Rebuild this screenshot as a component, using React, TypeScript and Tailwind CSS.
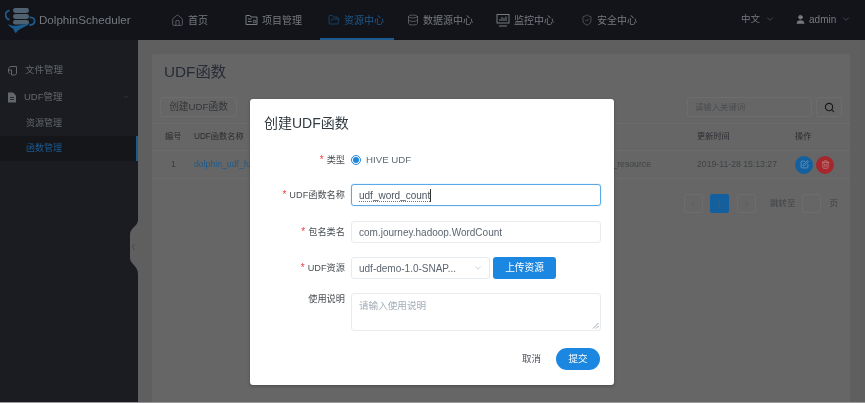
import React from 'react';
import { ChevronDown, ChevronLeft, ChevronRight, Database, FolderOpen, Home, Search, ShieldCheck, SquarePen, Trash2, User } from 'lucide-react';

const font = 'font-["Liberation_Sans","Noto_Sans_CJK_SC",sans-serif]';

const Logo = () => (
    <svg width="34" height="34" viewBox="0 0 34 34" fill="none" className="shrink-0">
        <path d="M4.5 7.5 C1 8 0 11 1 13.5 C1.5 15.5 3 16.5 4.5 16.5" stroke="#1d5a8a" strokeWidth="1.8" />
        <path d="M24.5 14.5 C29 14 30 17 29.5 19 C29 21 27 22 24.5 22" stroke="#1d5a8a" strokeWidth="1.8" />
        <rect x="8" y="5" width="16" height="5" rx="2.4" fill="#4f6272" />
        <rect x="8" y="11" width="16" height="5" rx="2.4" fill="#4f6272" />
        <rect x="8" y="17" width="16" height="4.5" rx="2.2" fill="#4f6272" />
        <path d="M3 21 C7 24 15 23 25 20 C20 25 14 25 11 30 C9.5 30 9 27 8 25.5 C6 24.5 4 23 3 21 Z" fill="#1a5c90" />
    </svg>
);

const ProjectIcon = () => (
    <svg width="13" height="12" viewBox="0 0 13 12" fill="none" stroke="#777a7e" strokeWidth="1">
        <path d="M1 10.5 V1.5 H5 L6 3 H12 V10.5 Z" />
        <path d="M3 5 H6.5 M3 7.5 H6.5" />
        <circle cx="9.5" cy="7.5" r="1.3" />
    </svg>
);

const MonitorIcon = () => (
    <svg width="14" height="13" viewBox="0 0 14 13" fill="none" stroke="#777a7e" strokeWidth="1">
        <rect x="1" y="0.5" width="12" height="8.5" />
        <path d="M4 7 V5 M6 7 V3 M8 7 V4 M10 7 V2.5 M3 12 H11" />
    </svg>
);

const FilesIcon = () => (
    <svg width="11" height="11" viewBox="0 0 11 11" fill="none" stroke="#63666a" strokeWidth="1">
        <path d="M4 1.5 H9.5 V8 C9.5 9.3 8.5 10 7.5 10 H4.5 V5 H1.5 C1.5 3 2.5 1.5 4 1.5 Z" />
        <path d="M1.5 5 V7.5 L3 9" />
    </svg>
);

const DocIcon = () => (
    <svg width="10" height="11" viewBox="0 0 10 11">
        <path d="M1 0.5 H6 L9 3.5 V10.5 H1 Z" fill="#63666a" />
        <path d="M3 5.5 H7 M3 7.5 H7" stroke="#1a1c21" strokeWidth="0.8" />
    </svg>
);

const NavItem: React.FC<{ icon: React.ReactNode; label: string; className: string; active?: boolean }> = ({ icon, label, className, active }) => (
    <div className={`flex items-center h-10 gap-[4px] text-[10px] ${active ? 'text-[#1d5a8f]' : 'text-[#777a7e]'} ${className}`}>
        {icon}
        <span>{label}</span>
    </div>
);

const PageBox: React.FC<{ children?: React.ReactNode; className?: string }> = ({ children, className = '' }) => (
    <div className={`w-[19px] h-[19px] flex items-center justify-center rounded-[2px] border border-[#6c6d6d] text-[#565757] ${className}`}>
        {children}
    </div>
);

const FormRow: React.FC<{ label: string; required?: boolean; className?: string; children: React.ReactNode }> = ({ label, required, className = '', children }) => (
    <div className={`flex items-center ${className}`}>
        <div className="w-[81px] text-right text-[9.2px] text-[#4a4f55] mr-[6px] whitespace-nowrap">
            {required && <span className="text-[#f03c3c] mr-[3px] text-[10px]">*</span>}
            {label}
        </div>
        {children}
    </div>
);

export default function App() {
    return (
        <div className={`relative w-[865px] h-[403px] overflow-hidden flex flex-col bg-[#5f5f5f] border-b border-[#9a9a9a] blur-[0.35px] ${font}`}>
            {/* Top nav */}
            <header className="h-10 shrink-0 bg-[#12141a] flex items-center pl-[5px] text-[#777a7e]">
                <Logo />
                <span className="text-[11.6px] w-[132px]">DolphinScheduler</span>
                <NavItem icon={<Home size={13} strokeWidth={1.2} />} label="首页" className="w-[74px]" />
                <NavItem icon={<ProjectIcon />} label="项目管理" className="w-[75px]" />
                <div className="relative w-[87px] pl-[8px] h-10 flex items-center">
                    <NavItem icon={<FolderOpen size={12} strokeWidth={1.2} />} label="资源中心" className="" active />
                    <div className="absolute bottom-0 left-0 w-[74px] h-[2px] bg-[#1d5a8f]" />
                </div>
                <NavItem icon={<Database size={12} strokeWidth={1.3} />} label="数据源中心" className="w-[89px]" />
                <NavItem icon={<MonitorIcon />} label="监控中心" className="w-[85px]" />
                <NavItem icon={<ShieldCheck size={12} strokeWidth={1.1} />} label="安全中心" className="w-[160px]" />
                <span className="text-[9.5px] mb-[2px]">中文</span>
                <ChevronDown size={10} strokeWidth={1.2} className="ml-[5px] mb-[2px]" />
                <User size={11} fill="#777a7e" className="ml-[20px] mb-[2px]" />
                <span className="text-[10px] ml-[3px] mb-[2px]">admin</span>
                <ChevronDown size={10} strokeWidth={1.2} className="ml-[5px] mb-[2px]" />
            </header>

            <div className="flex-1 flex min-h-0">
                {/* Sidebar */}
                <aside className="relative w-[138px] shrink-0 bg-[#1a1c21] pt-[19px] text-[9.5px] text-[#63666a]">
                    <div className="flex items-center h-[22px] pl-[7px] gap-[7px]">
                        <FilesIcon />
                        <span>文件管理</span>
                    </div>
                    <div className="flex items-center h-[22px] pl-[7px] gap-[7px] mt-[5px]">
                        <DocIcon />
                        <span>UDF管理</span>
                        <ChevronDown size={8} className="ml-auto mr-[8px] text-[#3a3c40]" />
                    </div>
                    <div className="h-[25px] mt-[3px] pl-[26px] flex items-center text-[9px]">资源管理</div>
                    <div className="h-[25px] pl-[26px] flex items-center bg-[#14161a] text-[9px] text-[#1d5a8f] border-r-2 border-[#1d5a8f]">函数管理</div>
                    {/* collapse handle */}
                    <svg width="8" height="54" viewBox="0 0 8 54" className="absolute right-0 top-[180px]">
                        <path d="M8 0 C8 6 0 8 0 14 V38 C0 44 8 46 8 54 Z" fill="#5f5f5f" />
                        <path d="M4.5 24 L2.5 27 L4.5 30" stroke="#45474a" fill="none" />
                    </svg>
                </aside>

                {/* Content */}
                <main className="flex-1 pt-[14px] pl-[14px] pr-[15px] min-w-0">
                    <div className="h-full bg-[#666666] rounded-t-[2px] text-[#3f4245]">
                        <h1 className="text-[15.3px] text-[#262b35] pl-[12px] pt-[7px] leading-[22px]">UDF函数</h1>
                        <div className="flex items-center mt-[14px] pl-[8px] pr-[8px]">
                            <div className="w-[77px] h-[20px] flex items-center justify-center border border-[#6c6d6d] rounded-[3px] text-[9.7px] text-[#333538]">创建UDF函数</div>
                            <div className="ml-auto w-[125px] h-[20px] flex items-center pl-[7px] border border-[#6c6d6d] rounded-[3px] text-[8.4px] text-[#4a4c4e]">请输入关键词</div>
                            <div className="ml-[4px] w-[26px] h-[20px] flex items-center justify-center border border-[#6c6d6d] rounded-[3px] text-[#16181c]">
                                <Search size={11} strokeWidth={2.4} />
                            </div>
                        </div>
                        {/* Table */}
                        <div className="mt-[6px] border-t border-[#6b6c6c]">
                            <div className="h-[27px] flex items-center text-[8.2px] text-[#2a2c30] border-b border-[#6b6c6c]">
                                <span className="ml-[13px] w-[29px]">编号</span>
                                <span>UDF函数名称</span>
                                <span className="ml-auto w-[98px]">更新时间</span>
                                <span className="w-[55px]">操作</span>
                            </div>
                            <div className="h-[28px] flex items-center text-[8.7px] border-b border-[#6b6c6c]">
                                <span className="ml-[19px] w-[23px] text-[#3a3c40]">1</span>
                                <span className="text-[#1d5a8f] whitespace-nowrap">dolphin_udf_func</span>
                                <span className="ml-auto mr-[46px] text-[#3f4245]">_resource</span>
                                <span className="w-[98px] text-[#3f4245]">2019-11-28 15:13:27</span>
                                <div className="w-[55px] flex gap-[3px]">
                                    <div className="w-[18px] h-[18px] rounded-full bg-[#14609f] flex items-center justify-center text-[#6f9bc4]"><SquarePen size={9} /></div>
                                    <div className="w-[18px] h-[18px] rounded-full bg-[#a5282e] flex items-center justify-center text-[#c78486]"><Trash2 size={9} /></div>
                                </div>
                            </div>
                            {/* Pagination */}
                            <div className="flex items-center justify-end mt-[15px] pr-[12px] text-[8.5px]">
                                <PageBox><ChevronLeft size={9} /></PageBox>
                                <PageBox className="ml-[7px] bg-[#14609f] border-[#14609f] text-[#8fb0cc]">1</PageBox>
                                <PageBox className="ml-[8px]"><ChevronRight size={9} /></PageBox>
                                <span className="ml-[14px] text-[#3f4245]">跳转至</span>
                                <PageBox className="ml-[7px]" />
                                <span className="ml-[8px] text-[#3f4245]">页</span>
                            </div>
                        </div>
                    </div>
                </main>
            </div>

            {/* Modal */}
            <div className="absolute left-[250px] top-[99px] w-[364px] h-[286px] bg-white rounded-[3px] shadow-[0_1px_3px_rgba(0,0,0,0.3)] pl-[14px] pr-[13px] pt-[13px]">
                <h2 className="text-[14px] leading-[22px] text-[#333a40]">创建UDF函数</h2>
                <FormRow label="类型" required className="mt-[18px] h-[16px]">
                    <div className="w-[10px] h-[10px] rounded-full border border-[#1c87e0] flex items-center justify-center">
                        <div className="w-[6px] h-[6px] rounded-full bg-[#1c87e0]" />
                    </div>
                    <span className="ml-[5px] text-[9.7px] text-[#606a72]">HIVE UDF</span>
                </FormRow>
                <FormRow label="UDF函数名称" required className="mt-[16px]">
                    <div className="w-[250px] h-[22px] flex items-center pl-[7px] border border-[#5aa9e6] rounded-[3px] text-[10px] text-[#4d5560] shadow-[0_0_1px_#5aa9e6]">
                        <span className="underline decoration-dotted decoration-[#ef3a3a] underline-offset-2">udf_word_count</span>
                        <span className="w-px h-[13px] bg-[#333]" />
                    </div>
                </FormRow>
                <FormRow label="包名类名" required className="mt-[15px]">
                    <div className="w-[250px] h-[22px] flex items-center pl-[7px] border border-[#e6ebf0] rounded-[3px] text-[10px] text-[#5c6670]">com.journey.hadoop.WordCount</div>
                </FormRow>
                <FormRow label="UDF资源" required className="mt-[14px]">
                    <div className="w-[139px] h-[22px] flex items-center pl-[7px] pr-[6px] border border-[#e6ebf0] rounded-[3px] text-[10px] text-[#5c6670]">
                        <span className="whitespace-nowrap">udf-demo-1.0-SNAP...</span>
                        <ChevronDown size={10} strokeWidth={1.2} className="ml-auto text-[#9aa3ab]" />
                    </div>
                    <div className="ml-[3px] w-[63px] h-[22px] flex items-center justify-center bg-[#1c87e0] rounded-[3px] text-[9.7px] text-white">上传资源</div>
                </FormRow>
                <FormRow label="使用说明" className="mt-[14px] items-start">
                    <div className="relative w-[250px] h-[38px] pl-[7px] pt-[5px] border border-[#e6ebf0] rounded-[3px] text-[9.6px] text-[#a3aeb8]">
                        请输入使用说明
                        <svg width="7" height="7" viewBox="0 0 7 7" className="absolute right-[1px] bottom-[1px]" stroke="#8a8f94" strokeWidth="0.8">
                            <path d="M1 6.5 L6.5 1 M4 6.5 L6.5 4" />
                        </svg>
                    </div>
                </FormRow>
                <div className="flex items-center justify-end mt-[17px] mr-[1px]">
                    <span className="text-[9.5px] text-[#4d5560]">取消</span>
                    <div className="ml-[15px] w-[44px] h-[22px] rounded-full bg-[#1c87e0] flex items-center justify-center text-[9.5px] text-white">提交</div>
                </div>
            </div>
        </div>
    );
}
